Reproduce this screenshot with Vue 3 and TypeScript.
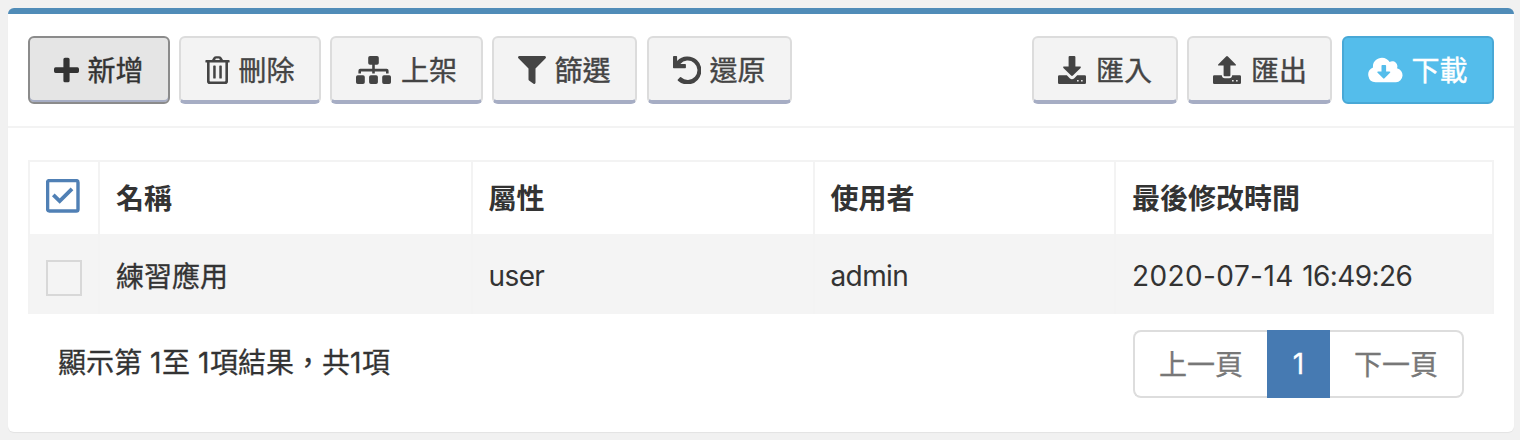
<script setup lang="ts">
interface ToolButton {
  key: string
  label: string
  iconWidth: number
  paths: string[]
  active?: boolean
  primary?: boolean
}

interface Row {
  name: string
  role: string
  owner: string
  date: string
  time: string
}

const trayDots = 'M19.1 24h1.500v1.500h-1.500zM23.100 24h1.500v1.500h-1.500z'

const leftButtons: ToolButton[] = [
  {
    key: 'add',
    label: '新增',
    iconWidth: 25,
    active: true,
    paths: [
      'M11 1.700h3a1.600 1.600 0 0 1 1.600 1.600v8h7.800a1.600 1.600 0 0 1 1.600 1.600v2.400a1.600 1.600 0 0 1-1.600 1.600h-7.800V24.700a1.600 1.600 0 0 1-1.600 1.600h-3A1.600 1.600 0 0 1 9.400 24.700v-7.800H1.600A1.600 1.600 0 0 1 0 15.300v-2.400a1.600 1.600 0 0 1 1.600-1.600h7.800v-8A1.600 1.600 0 0 1 11 1.700z',
    ],
  },
  {
    key: 'remove',
    label: '刪除',
    iconWidth: 25,
    paths: [
      'M7 4l1.500-2.500Q9.400.3 11.100.3h2.800q1.700 0 2.600 1.200L18 4h5.900q.7 0 .7.700v1.200q0 .7-.7.700H23v18.600q0 2.800-2.700 2.800H4.700Q2 28 2 25.200V6.600H1.100Q.4 6.600.4 5.900V4.700Q.4 4 1.100 4zM10.100 4h4.800l-.8-1.400H10.900zM4.600 6.600v18.100q0 .7.700.7h14.400q.7 0 .7-.7V6.600zM8.200 10.100q0-.7.700-.7h1.100q.7 0 .7.700v11.800q0 .7-.7.700H8.900q-.7 0-.7-.7zM14.300 10.100q0-.7.700-.7h1.100q.7 0 .7.700v11.800q0 .7-.7.700H15q-.7 0-.7-.7z',
    ],
  },
  {
    key: 'publish',
    label: '上架',
    iconWidth: 35,
    paths: [
      'M14 0h7q1.800 0 1.800 1.800V7q0 1.800-1.800 1.800h-2.200v4H30.600q2 0 2 2V17.500H30v-2.100H18.800v2.100h-2.600v-2.100H5v2.100H2.400V14.800q0-2 2-2H16.200v-4H14Q12.200 8.800 12.200 7V1.800Q12.200 0 14 0z',
      'M1.800 19.300H7q1.800 0 1.800 1.800v5.100Q8.800 28 7 28H1.800Q0 28 0 26.200v-5.100q0-1.800 1.800-1.800zM14.900 19.300h5.200q1.800 0 1.800 1.800v5.100q0 1.800-1.800 1.800h-5.200q-1.800 0-1.800-1.800v-5.100q0-1.800 1.800-1.800zM28 19.300h5.200q1.800 0 1.800 1.800v5.100q0 1.800-1.800 1.800H28q-1.800 0-1.800-1.800v-5.100q0-1.800 1.800-1.800z',
    ],
  },
  {
    key: 'filter',
    label: '篩選',
    iconWidth: 28,
    paths: [
      'M1.200 0h25.600q1.500.3 1.100 1.700l-.5.800-9.900 10V26.700q-.4 1.600-2 1.100l-4.500-3.200q-.5-.4-.5-1V12.500L.4 2.300Q-.7.500 1.200 0z',
    ],
  },
  {
    key: 'restore',
    label: '還原',
    iconWidth: 28,
    paths: [
      'M1 0h2.400q.7 0 .7.700v4.200A14 14 0 1 1 4.900 24.700q-.6-.6 0-1.200L7 21.300q.5-.5 1.100 0A9.700 9.700 0 1 0 7.300 8h4.900q.7 0 .7.700v2.800q0 .7-.7.700H.700Q0 12.200 0 11.500V.700Q0 0 1 0z',
    ],
  },
]

const rightButtons: ToolButton[] = [
  {
    key: 'import',
    label: '匯入',
    iconWidth: 28,
    paths: [
      'M11.700 0h4.600q1.100 0 1.100 1.100v9.400h4.500q1.800 0 .7 1.400l-7.700 7.700q-.9.900-1.800 0l-7.700-7.700q-1.100-1.400.7-1.400h4.500V1.100Q10.600 0 11.700 0z',
      `M1.300 19.300h7.500l2.900 2.900q2.300 1.900 4.600 0l2.900-2.900h7.500q1.300 0 1.300 1.300v6.100q0 1.300-1.300 1.300H1.300Q0 28 0 26.700v-6.100q0-1.300 1.300-1.300z${trayDots}`,
    ],
  },
  {
    key: 'export',
    label: '匯出',
    iconWidth: 28,
    paths: [
      'M13.100.5q.9-.9 1.800 0l7.700 7.700q1.100 1.400-.7 1.400h-4.500v9.600q0 1.100-1.100 1.100h-4.600q-1.100 0-1.100-1.100V9.600H6.100q-1.800 0-.7-1.400z',
      `M1.300 19.300h7.500q.3 2.900 3 2.900h4.400q2.700 0 3-2.900h7.500q1.300 0 1.300 1.300v6.100q0 1.300-1.300 1.300H1.300Q0 28 0 26.700v-6.100q0-1.300 1.300-1.300z${trayDots}`,
    ],
  },
  {
    key: 'download',
    label: '下載',
    iconWidth: 35,
    primary: true,
    paths: [
      'M7.600 26.300A7.700 7.700 0 0 1 5 11.500C4.300 5.900 8.800 1.800 14 1.800c3.300 0 6 1.600 7.600 4.200 3.800-2.100 8.500.9 7.700 5.300l-.3 1A7.100 7.100 0 0 1 28 26.300zM14.300 9q-.8 0-.8.800v5.700h-3.300q-1.600.1-.6 1.300l5.500 5.500q.7.700 1.400 0l5.500-5.500q1-1.200-.6-1.300h-3.300V9.800q0-.8-.8-.8z',
    ],
  },
]

const columns = ['名稱', '屬性', '使用者', '最後修改時間']
const rows: Row[] = [
  { name: '練習應用', role: 'user', owner: 'admin', date: '2020-07-14', time: '16:49:26' },
]
</script>

<template>
  <main class="page">
    <section class="card">
      <header class="toolbar">
        <div class="group">
          <button
            v-for="b in leftButtons"
            :key="b.key"
            type="button"
            :class="['btn', b.key, { active: b.active }]"
          >
            <svg class="icon" :width="b.iconWidth" height="28" :viewBox="`0 0 ${b.iconWidth} 28`">
              <path v-for="(d, i) in b.paths" :key="i" :d="d" fill-rule="evenodd" />
            </svg>
            <span>{{ b.label }}</span>
          </button>
        </div>
        <div class="group">
          <button
            v-for="b in rightButtons"
            :key="b.key"
            type="button"
            :class="['btn', b.key, { primary: b.primary }]"
          >
            <svg class="icon" :width="b.iconWidth" height="28" :viewBox="`0 0 ${b.iconWidth} 28`">
              <path v-for="(d, i) in b.paths" :key="i" :d="d" fill-rule="evenodd" />
            </svg>
            <span>{{ b.label }}</span>
          </button>
        </div>
      </header>

      <div class="content">
        <div class="table">
          <div class="tr head">
            <div class="cell check">
              <svg class="checked" width="34" height="34" viewBox="0 0 34 34">
                <rect x="1.600" y="1.600" width="30.400" height="30.400" rx="1.800" />
                <path class="tick" d="M7.300 15.800l6.400 6.300L26 9.900" />
              </svg>
            </div>
            <div v-for="c in columns" :key="c" class="cell text">{{ c }}</div>
          </div>
          <div v-for="r in rows" :key="r.name" class="tr body">
            <div class="cell check"><span class="box"></span></div>
            <div class="cell text name">{{ r.name }}</div>
            <div class="cell text latin">{{ r.role }}</div>
            <div class="cell text latin">{{ r.owner }}</div>
            <div class="cell text">
              <span class="date">{{ r.date }}</span>
              <span class="time">{{ r.time }}</span>
            </div>
          </div>
        </div>

        <footer class="footer">
          <div class="info">顯示第 <b>1</b>至 <b>1</b>項結果，共<b>1</b>項</div>
          <nav class="pager">
            <a class="prev">上一頁</a>
            <a class="current">1</a>
            <a class="next">下一頁</a>
          </nav>
        </footer>
      </div>
    </section>
  </main>
</template>

<style>
body {
  margin: 0;
  background: #f1f1f1;
}
</style>

<style scoped>
.page {
  box-sizing: border-box;
  width: 1520px;
  height: 440px;
  padding: 8px 6px 8px 8px;
  background: #f1f1f1;
  font-family: Inter, 'Noto Sans CJK TC', sans-serif;
  font-size: 28px;
  line-height: 40px;
  color: #333;
}

.card {
  box-sizing: border-box;
  height: 424px;
  border-top: 6px solid #508cb8;
  border-radius: 6px;
  background: #fff;
  box-shadow: 0 1px 1px rgba(0, 0, 0, 0.06);
}

.toolbar {
  box-sizing: border-box;
  display: flex;
  justify-content: space-between;
  height: 114px;
  padding: 22px 20px 0;
  border-bottom: 2px solid #f3f3f3;
}

.group {
  display: flex;
  gap: 9px;
}

.btn {
  box-sizing: border-box;
  display: flex;
  align-items: center;
  width: 145px;
  height: 68px;
  padding: 1px 0 0 24px;
  border: 2px solid #dcdcdc;
  border-bottom: 4px solid #a6adc4;
  border-radius: 6px;
  background: #f3f3f3;
  color: #444;
  font: inherit;
  white-space: nowrap;
}

.btn span {
  margin-left: 8.500px;
  padding-top: 3px;
  -webkit-text-stroke: 0.4px currentColor;
}

.icon {
  flex: none;
  fill: currentColor;
}

.add,
.remove {
  width: 142px;
}

.btn.active {
  padding-bottom: 2px;
  border: 2px solid #8b8b8b;
  background: #e5e5e5;
  box-shadow: inset 0 -2px 0 #a6adc4;
  color: #333;
}

.publish {
  width: 153px;
}

.publish span {
  margin-left: 10px;
}

.restore {
  margin-left: 1px;
}

.import {
  width: 146px;
}

.btn.primary {
  width: 152px;
  margin-left: 1px;
  padding-bottom: 2px;
  border: 2px solid #48a8d6;
  background: #54bdeb;
  color: #fff;
}

.import span,
.export span {
  margin-left: 10px;
}

.content {
  padding: 32px 20px 0;
}

.table {
  border: 2px solid #f3f3f3;
  border-bottom: 0;
}

.tr {
  display: grid;
  grid-template-columns: 70px 373px 342px 301px 1fr;
  height: 72px;
}

.tr.body {
  height: 80px;
  background: #f4f4f4;
}

.cell {
  box-sizing: border-box;
  display: flex;
  align-items: center;
  padding-left: 16px;
  border-right: 2px solid #f3f3f3;
}

.cell:last-child {
  border-right: 0;
}

.head .text {
  padding-top: 2px;
  font-weight: 700;
}

.body .text {
  padding-top: 4px;
}

.body .name {
  padding-top: 5px;
  -webkit-text-stroke: 0.3px currentColor;
}

.text:nth-child(3),
.text:nth-child(4) {
  padding-left: 15.500px;
}

.body .latin {
  letter-spacing: -0.6px;
}

.date {
  letter-spacing: 0.4px;
}

.time {
  margin-left: 8.500px;
  letter-spacing: -0.6px;
}

.checked {
  margin-top: -4px;
  fill: none;
  stroke: #5080b5;
  stroke-width: 3.400;
}

.tick {
  stroke-width: 3.800;
}

.box {
  box-sizing: border-box;
  width: 36px;
  height: 36px;
  margin-top: 8px;
  border: 2px solid #d8d8d8;
  background: #f4f4f4;
}

.footer {
  display: flex;
  justify-content: space-between;
  padding: 16px 30px 0;
}

.info {
  padding-top: 13px;
  -webkit-text-stroke: 0.3px currentColor;
}

.info b {
  font-weight: 400;
  letter-spacing: 0.7px;
}

.pager {
  box-sizing: border-box;
  display: grid;
  grid-template-columns: 134px 63px 134px;
  height: 68px;
  text-align: center;
  line-height: 66px;
  color: #777;
  -webkit-text-stroke: 0.3px currentColor;
}

.prev,
.next {
  box-sizing: border-box;
  height: 68px;
  border: 2px solid #ddd;
}

.prev {
  border-right: 0;
  border-radius: 8px 0 0 8px;
}

.next {
  border-left: 0;
  border-radius: 0 8px 8px 0;
}

.current {
  background: #467ab2;
  color: #fff;
  line-height: 68px;
}
</style>
